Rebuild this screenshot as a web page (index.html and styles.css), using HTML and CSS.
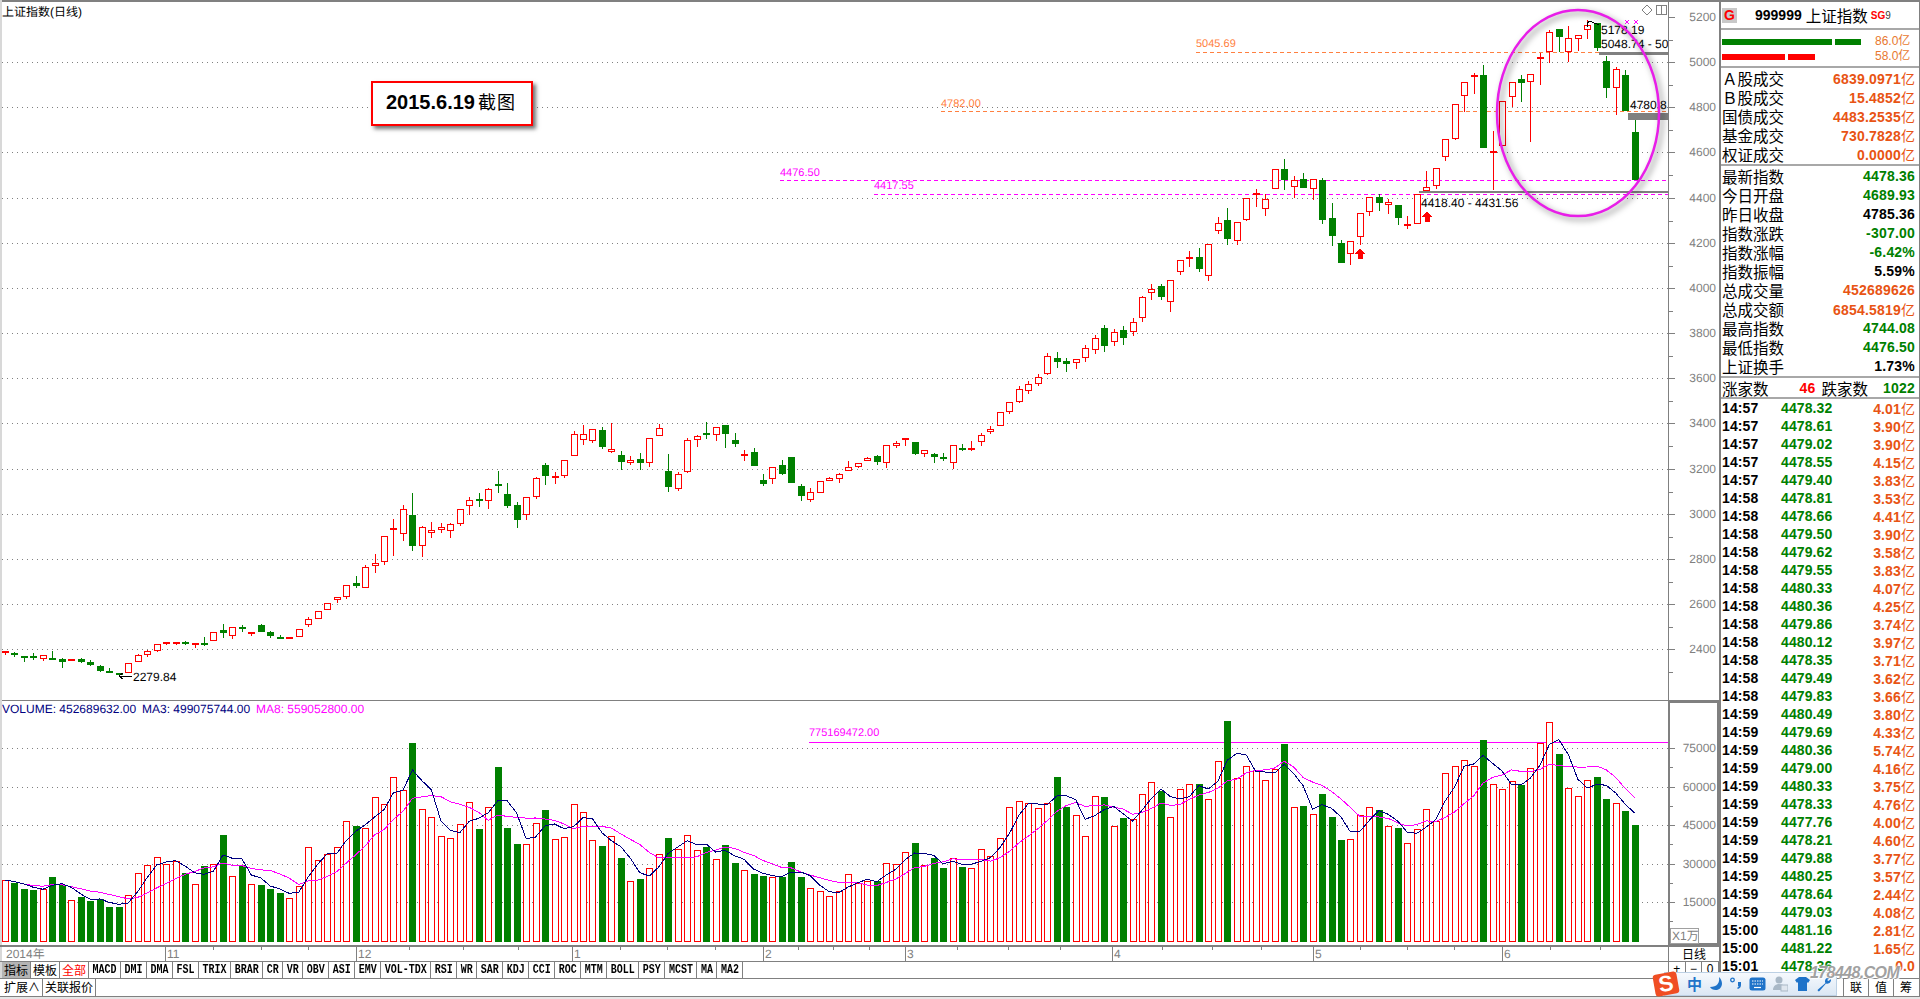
FILE: index.html
```html
<!DOCTYPE html>
<html lang="zh-CN">
<head>
    <meta charset="UTF-8">
    <title>上证指数(日线)</title>
    <link rel="stylesheet" href="styles.css">
</head>
<body>
<div class="app">
    <div class="workspace">
        <div class="chart-col">
            <div class="price-pane">
                <svg id="price-chart" class="chart" width="1719" height="701" viewBox="0 0 1719 701"></svg>
                <div class="note">2015.6.19<span class="note-cn">截图</span></div>
            </div>
            <div class="vol-pane">
                <svg id="vol-chart" class="chart" width="1719" height="244" viewBox="0 701 1719 244"></svg>
            </div>
            <div class="date-row">
                <svg id="date-axis" class="chart" width="1668" height="16" viewBox="0 945 1668 16"></svg>
                <div class="cycle">日线</div>
            </div>
            <div class="tab-row">
                <div class="tabs">
                    <span class="tab tab-cn tab-on">指标</span>
                    <span class="tab tab-cn">模板</span>
                    <span class="tab tab-cn tab-red">全部</span>
                    <span class="tab"><i>MACD</i></span>
                    <span class="tab"><i>DMI</i></span>
                    <span class="tab"><i>DMA</i></span>
                    <span class="tab"><i>FSL</i></span>
                    <span class="tab"><i>TRIX</i></span>
                    <span class="tab"><i>BRAR</i></span>
                    <span class="tab"><i>CR</i></span>
                    <span class="tab"><i>VR</i></span>
                    <span class="tab"><i>OBV</i></span>
                    <span class="tab"><i>ASI</i></span>
                    <span class="tab"><i>EMV</i></span>
                    <span class="tab"><i>VOL-TDX</i></span>
                    <span class="tab"><i>RSI</i></span>
                    <span class="tab"><i>WR</i></span>
                    <span class="tab"><i>SAR</i></span>
                    <span class="tab"><i>KDJ</i></span>
                    <span class="tab"><i>CCI</i></span>
                    <span class="tab"><i>ROC</i></span>
                    <span class="tab"><i>MTM</i></span>
                    <span class="tab"><i>BOLL</i></span>
                    <span class="tab"><i>PSY</i></span>
                    <span class="tab"><i>MCST</i></span>
                    <span class="tab"><i>MA</i></span>
                    <span class="tab"><i>MA2</i></span>
                </div>
                <div class="zoom-btns">
                    <span class="zoom-btn">+</span>
                    <span class="zoom-btn">−</span>
                    <span class="zoom-btn">0</span>
                </div>
            </div>
        </div>
        <div class="side">
            <div class="side-head">
                <span class="badge">G</span>
                <span class="code">999999</span>
                <span class="name">上证指数</span>
                <span class="sg">SG</span><span class="sg-num">9</span>
            </div>
            <div class="flow">
                <div class="flow-row">
                    <div class="flow-bars"><b class="bar bar-g bar-110"></b><b class="bar bar-g bar-26"></b></div>
                    <span class="flow-val">86.0亿</span>
                </div>
                <div class="flow-row">
                    <div class="flow-bars"><b class="bar bar-r bar-63"></b><b class="bar bar-r bar-27"></b></div>
                    <span class="flow-val">58.0亿</span>
                </div>
            </div>
            <div class="section">
                <div class="row"><span class="label">Ａ股成交</span><span class="val orange">6839.0971<em>亿</em></span></div>
                <div class="row"><span class="label">Ｂ股成交</span><span class="val orange">15.4852<em>亿</em></span></div>
                <div class="row"><span class="label">国债成交</span><span class="val orange">4483.2535<em>亿</em></span></div>
                <div class="row"><span class="label">基金成交</span><span class="val orange">730.7828<em>亿</em></span></div>
                <div class="row"><span class="label">权证成交</span><span class="val orange">0.0000<em>亿</em></span></div>
            </div>
            <div class="section">
                <div class="row"><span class="label">最新指数</span><span class="val green">4478.36</span></div>
                <div class="row"><span class="label">今日开盘</span><span class="val green">4689.93</span></div>
                <div class="row"><span class="label">昨日收盘</span><span class="val">4785.36</span></div>
                <div class="row"><span class="label">指数涨跌</span><span class="val green">-307.00</span></div>
                <div class="row"><span class="label">指数涨幅</span><span class="val green">-6.42%</span></div>
                <div class="row"><span class="label">指数振幅</span><span class="val">5.59%</span></div>
                <div class="row"><span class="label">总成交量</span><span class="val orange">452689626</span></div>
                <div class="row"><span class="label">总成交额</span><span class="val orange">6854.5819<em>亿</em></span></div>
                <div class="row"><span class="label">最高指数</span><span class="val green">4744.08</span></div>
                <div class="row"><span class="label">最低指数</span><span class="val green">4476.50</span></div>
                <div class="row"><span class="label">上证换手</span><span class="val">1.73%</span></div>
            </div>
            <div class="counts">
                <span class="label">涨家数</span>
                <span class="val red count-up">46</span>
                <span class="label count-label">跌家数</span>
                <span class="val green count-down">1022</span>
            </div>
            <div id="trades" class="trades"></div>
        </div>
    </div>
    <div class="status-row">
        <div class="tabs">
            <span class="tab tab-cn">扩展∧</span>
            <span class="tab tab-cn">关联报价</span>
        </div>
        <div class="links">
            <span class="link">联</span>
            <span class="link">值</span>
            <span class="link">筹</span>
        </div>
    </div>

    <div class="ime">
        <span class="ime-logo"><span class="ime-s">S</span></span>
        <span class="ime-cn">中</span>
        <svg class="ime-icon" width="14" height="16" viewBox="0 0 14 16"><path d="M10 1c1 6-2 10-9 10 2 4 11 5 12-3 0-3-1-5-3-7z" fill="#1f73c9"/></svg>
        <svg class="ime-icon" width="12" height="14" viewBox="0 0 12 14"><circle cx="2.5" cy="3" r="1.8" fill="none" stroke="#1f73c9" stroke-width="1.3"/><path d="M8 5h3v3c0 2-1 3-3 4l-1-1c1-.5 1.500-1 1.600-2H8z" fill="#1f73c9"/></svg>
        <svg class="ime-icon" width="17" height="14" viewBox="0 0 17 14"><rect x="0.500" y="0.500" width="16" height="13" rx="2.500" fill="#1f73c9"/><path d="M3 4h11M3 7h11" stroke="#fff" stroke-dasharray="1.500 1" fill="none"/><path d="M5 10.500h7" stroke="#fff" stroke-width="1.200"/></svg>
        <svg class="ime-icon" width="15" height="16" viewBox="0 0 15 16"><circle cx="6" cy="4" r="3.500" fill="#a9b8c6"/><path d="M0 14c0-4 3-6 6-6s5 1 6 3v3z" fill="#a9b8c6"/><rect x="8" y="9" width="7" height="6" fill="#dfe6ee" stroke="#a9b8c6"/></svg>
        <svg class="ime-icon" width="15" height="14" viewBox="0 0 15 14"><path d="M4 0h7l4 3-2 3-1-1v9H3V5L2 6 0 3z" fill="#1f73c9"/></svg>
        <svg class="ime-icon" width="15" height="15" viewBox="0 0 15 15"><path d="M13 1c-2-1-5 0-5 3 0 1 0 1 .5 2L1 12.500c-1 1 .5 2.500 1.500 1.500L9 6.500c3 1 5.500-1.500 5-4.500l-2.500 2L10 3z" fill="#1f73c9"/></svg>
    </div>
    <div class="watermark">178448.COM</div>
</div>
<script src="chart.js"></script>
</body>
</html>
```
FILE: styles.css
```css
* {
    box-sizing: border-box;
}
html, body {
    margin: 0;
    padding: 0;
    background: #fff;
    overflow: hidden;
}
body {
    font-family: "Liberation Sans", "Noto Sans CJK SC", sans-serif;
    font-size: 12px;
    color: #000;
}
.app {
    position: relative;
    width: 1920px;
    height: 999px;
    background: #e6e6e6;
}
.workspace {
    display: flex;
    height: 978px;
    background: #fff;
    border-top: 2px solid #808080;
}
.chart-col {
    width: 1719px;
    margin-top: -2px;
    border-left: 2px solid #d8d8d8;
    position: relative;
}
.chart {
    display: block;
    shape-rendering: crispEdges;
}
.chart text {
    font-family: "Liberation Sans", "Noto Sans CJK SC", sans-serif;
    font-size: 12px;
    text-rendering: geometricPrecision;
}
.chart .small {
    font-size: 11px;
}
.chart .axis-label {
    fill: #808080;
    text-anchor: end;
}
.chart .ring {
    shape-rendering: auto;
    filter: drop-shadow(3px 3px 3px rgba(0, 0, 0, .5));
}
.chart .ma {
    fill: none;
    stroke-width: 1;
}
.price-pane {
    position: relative;
    width: 1717px;
    height: 701px;
    overflow: hidden;
}
.price-pane .chart {
    margin-left: -2px;
}
.vol-pane {
    width: 1717px;
    height: 244px;
    overflow: hidden;
}
.vol-pane .chart {
    margin-left: -2px;
}
.note {
    position: absolute;
    left: 369px;
    top: 81px;
    width: 162px;
    height: 45px;
    padding-left: 13px;
    background: #fff;
    border: 2px solid #f00;
    box-shadow: 3px 3px 4px rgba(0, 0, 0, .55);
    font-size: 20px;
    font-weight: bold;
    line-height: 37px;
}
.note-cn {
    font-family: "Noto Sans CJK SC", sans-serif;
    font-size: 18px;
    font-weight: normal;
    letter-spacing: 1px;
    margin-left: 3px;
}
.date-row {
    display: flex;
    height: 16px;
    margin-left: -2px;
    overflow: hidden;
}
.cycle {
    width: 51px;
    text-align: center;
    line-height: 14px;
    border-top: 2px solid #808080;
    border-left: 1px solid #808080;
    font-family: "Noto Sans CJK SC", sans-serif;
}
.tab-row {
    display: flex;
    height: 17px;
    margin-left: -2px;
    border-top: 1px solid #808080;
}
.tabs {
    display: flex;
    flex: 1;
    height: 100%;
    padding-left: 2px;
}
.tab {
    display: block;
    height: 100%;
    padding: 0 3.500px;
    border-right: 1px solid #808080;
    font-family: "Liberation Mono", monospace;
    font-size: 10px;
    font-weight: bold;
    line-height: 15px;
}
.tab i {
    display: inline-block;
    font-style: normal;
    transform: scaleY(1.3);
}
.tab-cn {
    padding: 0 2px;
    font-family: "Noto Sans CJK SC", sans-serif;
    font-size: 12px;
    font-weight: normal;
    line-height: 15px;
}
.tab-on {
    background: #b4b4b4;
}
.tab-red {
    color: #f00;
}
.zoom-btns {
    display: flex;
    width: 51px;
    border-left: 1px solid #808080;
}
.zoom-btn {
    flex: 1;
    text-align: center;
    line-height: 15px;
    border-right: 1px solid #808080;
}
.side {
    width: 201px;
    margin-top: -2px;
    border-top: 2px solid #808080;
    border-left: 2px solid #808080;
    border-right: 1px solid #808080;
    overflow: hidden;
}
.side-head {
    display: flex;
    align-items: center;
    height: 28px;
    padding: 0 0 0 1px;
    border-bottom: 2px solid #a8a8a8;
    font-size: 14px;
}
.badge {
    width: 15px;
    height: 15px;
    background: #c8c8c8;
    color: #f00;
    font-weight: bold;
    font-size: 14px;
    line-height: 15px;
    text-align: center;
}
.code {
    margin-left: 18px;
    font-weight: bold;
    font-size: 14px;
}
.name {
    margin-left: 4px;
    font-family: "Noto Sans CJK SC", sans-serif;
    font-size: 15.500px;
}
.sg {
    margin-left: 3px;
    color: #f00;
    font-size: 10px;
    font-weight: bold;
}
.sg-num {
    color: #404040;
    font-size: 10px;
}
.flow {
    height: 38px;
    padding: 4px 0 0 1px;
    border-bottom: 2px solid #a8a8a8;
}
.flow-row {
    display: flex;
    align-items: center;
    height: 15px;
}
.flow-bars {
    display: flex;
    gap: 3px;
    width: 153px;
}
.bar {
    display: block;
    height: 6px;
}
.bar-g { background: #008000; }
.bar-r { background: #f00; }
.bar-110 { width: 110px; }
.bar-26 { width: 26px; }
.bar-63 { width: 63px; }
.bar-27 { width: 27px; }
.flow-val {
    color: #e87830;
    font-size: 12px;
    line-height: 15px;
    font-family: "Liberation Sans", "Noto Sans CJK SC", sans-serif;
}
.section {
    padding: 1px 4px 0 1px;
    border-bottom: 2px solid #a8a8a8;
}
.row {
    display: flex;
    justify-content: space-between;
    height: 19px;
    line-height: 19px;
}
.label {
    font-family: "Noto Sans CJK SC", sans-serif;
    font-size: 15.500px;
    font-weight: normal;
    white-space: nowrap;
}
.val {
    font-size: 14px;
    font-weight: bold;
    letter-spacing: .2px;
}
.val em {
    font-family: "Noto Sans CJK SC", sans-serif;
    font-style: normal;
    font-weight: normal;
    letter-spacing: 0;
}
.orange { color: #e85414; }
.green { color: #008000; }
.red { color: #f00; }
.counts {
    display: flex;
    height: 21px;
    padding: 0 4px 0 1px;
    line-height: 21px;
    border-bottom: 2px solid #a8a8a8;
}
.count-up {
    width: 47px;
    text-align: right;
}
.count-label {
    margin-left: 6px;
}
.count-down {
    margin-left: auto;
}
.trades {
    padding: 0 4px 0 1px;
}
.trade {
    display: flex;
    height: 18px;
    line-height: 18px;
    font-size: 14px;
    font-weight: bold;
    letter-spacing: .1px;
}
.trade-time {
    width: 59px;
}
.trade-price {
    width: 60px;
    color: #008000;
}
.trade-vol {
    flex: 1;
    color: #e85414;
    text-align: right;
}
.trade-vol em {
    font-family: "Noto Sans CJK SC", sans-serif;
    font-style: normal;
    font-weight: normal;
}
.status-row {
    display: flex;
    height: 19px;
    background: #fff;
    border-top: 1px solid #808080;
    border-bottom: 1px solid #808080;
    border-right: 1px solid #808080;
    font-family: "Noto Sans CJK SC", sans-serif;
}
.links {
    display: flex;
    width: 76px;
}
.link {
    width: 25px;
    text-align: center;
    font-size: 12px;
    line-height: 16px;
    border-left: 1px solid #808080;
}
.watermark {
    position: absolute;
    left: 1810px;
    top: 964px;
    color: rgba(130, 130, 130, .75);
    font-size: 16px;
    font-weight: bold;
    font-style: italic;
    letter-spacing: -.6px;
    text-shadow: 0 0 2px #fff, 0 0 2px #fff, 1px 1px 1px #fff;
}
.ime {
    position: absolute;
    left: 1664px;
    top: 972px;
    display: flex;
    align-items: center;
    gap: 7px;
    width: 173px;
    height: 24px;
    padding-left: 22px;
    background: linear-gradient(#f6f9fd, #dbe7f4);
    border: 1px solid #bcd0e4;
}
.ime::after {
    content: "";
    position: absolute;
    right: 0;
    top: -2px;
    width: 5px;
    height: 5px;
    border-radius: 50%;
    background: #e04030;
}
.ime-logo {
    position: absolute;
    left: -11px;
    top: 0;
    width: 24px;
    height: 22px;
    background: #f04e23;
    border-radius: 3px;
    transform: rotate(-10deg);
    text-align: center;
}
.ime-s {
    color: #fff;
    font-size: 22px;
    font-weight: bold;
    line-height: 21px;
}
.ime-cn {
    color: #1f73c9;
    font-family: "Noto Sans CJK SC", sans-serif;
    font-size: 15px;
    font-weight: bold;
    line-height: 22px;
}
.ime-icon {
    display: block;
}
```
FILE: chart.js
```js
// candles: [color, body top, body bottom, high, low] - all in page pixels
var candles = [
    ['r',651,653,651,655],['g',653,655,652,657],['g',656,657,656,662],['g',656,657,653,660],['r',655,659,655,661],
    ['g',658,659,651,659],['g',659,662,658,668],['r',659,661,659,661],['g',659,662,658,663],['g',662,665,660,666],
    ['g',666,671,665,672],['g',671,672,668,672],['g',673,674,673,677],['r',663,673,663,673],['r',655,662,654,662],
    ['r',651,655,650,657],['r',644,651,644,652],['r',642,644,642,645],['r',642,643,642,645],['g',642,644,641,645],
    ['r',643,645,643,648],['g',643,645,637,646],['r',632,641,632,641],['g',630,633,624,638],['r',627,636,627,639],
    ['g',627,628,625,632],['r',632,633,632,636],['g',625,632,624,632],['g',632,636,631,638],['g',637,638,635,639],
    ['r',637,639,637,639],['r',629,637,629,637],['r',619,625,617,627],['r',611,619,611,619],['r',603,610,603,610],
    ['r',597,600,597,603],['r',585,597,585,599],['g',583,586,576,588],['r',567,588,565,588],['r',563,566,554,573],
    ['r',536,562,536,565],['r',528,530,519,556],['r',509,534,505,541],['g',515,546,493,551],['r',527,546,526,557],
    ['r',530,533,522,538],['r',527,530,523,533],['r',524,531,523,538],['r',509,524,509,526],['r',500,506,497,515],
    ['g',499,500,493,507],['r',489,501,488,509],['g',484,485,471,493],['g',494,506,483,508],['g',505,520,502,528],
    ['r',497,515,497,520],['r',478,497,477,499],['g',465,476,463,485],['r',476,477,472,484],['r',460,476,460,478],
    ['r',434,456,431,456],['r',434,440,425,445],['r',429,441,429,443],['g',430,447,427,449],['r',449,452,423,453],
    ['g',455,462,451,470],['r',460,463,456,465],['g',459,463,453,470],['r',438,463,438,467],['r',428,436,424,436],
    ['g',471,487,454,492],['r',474,489,472,491],['r',440,472,438,473],['r',436,440,435,447],['g',433,434,422,439],
    ['r',427,435,427,441],['g',425,434,425,448],['g',440,444,433,447],['r',454,456,450,461],['g',452,466,448,466],
    ['g',480,484,474,486],['r',467,479,467,484],['g',465,474,460,475],['g',457,483,457,483],['g',486,496,484,501],
    ['r',492,500,488,502],['r',481,493,481,493],['r',478,481,477,481],['r',474,479,473,483],['r',467,471,461,471],
    ['r',463,467,463,468],['r',458,461,457,461],['g',456,462,455,465],['r',445,463,445,468],['r',443,446,441,448],
    ['r',438,439,438,446],['g',442,454,442,455],['r',450,454,450,457],['g',454,457,453,463],['g',457,459,453,461],
    ['r',445,463,445,469],['g',448,449,444,451],['r',448,449,441,451],['r',435,442,433,446],['r',429,432,426,434],
    ['r',412,426,412,426],['r',402,412,402,414],['r',389,402,386,403],['r',384,391,381,394],['r',377,384,374,386],
    ['r',356,374,353,375],['g',358,362,352,368],['g',361,364,358,372],['r',359,363,359,369],['r',348,358,345,362],
    ['r',338,350,335,354],['g',328,346,325,352],['r',332,342,329,346],['g',330,338,326,345],['r',322,332,318,336],
    ['r',297,318,296,322],['r',289,293,284,300],['g',286,297,284,300],['r',280,302,280,312],['r',260,272,260,275],
    ['r',257,259,251,267],['g',257,269,248,272],['r',244,276,244,281],['r',223,231,217,234],['g',220,239,208,245],
    ['r',222,241,222,245],['r',198,220,198,221],['r',193,194,189,207],['r',199,209,194,216],['r',169,189,169,189],
    ['g',169,180,159,190],['r',180,187,176,198],['g',179,188,173,188],['r',179,189,179,200],['g',180,220,178,224],
    ['g',218,236,203,246],['g',243,263,240,263],['r',241,254,241,265],['r',213,237,213,245],['r',197,212,197,216],
    ['g',197,203,194,211],['r',202,205,199,214],['g',205,218,205,225],['r',224,226,216,229],['r',194,224,194,224],
    ['r',187,191,171,191],['r',168,186,168,189],['r',139,157,139,161],['r',104,139,104,140],['r',82,96,82,112],
    ['r',75,77,73,94],['g',75,148,65,148],['r',151,152,131,190],['r',101,146,101,146],['r',82,97,82,107],
    ['g',79,83,75,102],['r',74,82,74,142],['r',57,59,53,85],['r',32,52,30,63],['g',29,37,29,52],
    ['r',38,52,26,62],['r',35,39,35,51],['r',25,30,20,39],['g',23,48,23,51],['g',61,88,56,98],
    ['r',69,88,67,115],['g',75,111,70,111],['g',132,180,120,180]
];

// top of each volume bar
var volTops = [
    880,883,889,890,889,877,885,900,897,901,899,907,907,895,873,865,857,864,861,873,
    884,866,864,835,876,865,884,885,889,893,898,886,847,860,854,847,821,826,828,797,
    804,777,790,743,809,817,836,838,824,802,829,807,767,828,844,844,823,810,839,837,
    804,812,840,846,836,858,881,879,868,854,838,849,835,850,847,859,845,863,870,874,
    876,877,877,862,877,888,891,896,891,874,883,881,881,863,864,852,843,865,858,868,
    858,867,868,849,856,838,807,801,803,808,803,777,807,815,836,796,797,826,818,819,
    794,782,791,817,789,784,784,799,761,721,778,766,770,780,769,744,807,806,814,794,
    817,840,839,815,807,810,826,828,843,829,809,821,773,766,760,766,740,784,789,781,
    785,768,743,722,754,788,796,780,777,799,803,811,825
];
var VOL_BOTTOM = 942;
var RED = '#ff0000', GREEN = '#008000', GRAY = '#808080', NAVY = '#000080', PINK = '#ff00ff', ORANGE = '#ff8040';

function barX(i) {
    return 5 + 9.475 * i;
}
function line(x1, y1, x2, y2, color, extra) {
    return '<line x1="' + x1 + '" y1="' + y1 + '" x2="' + x2 + '" y2="' + y2 + '" stroke="' + color + '" ' + (extra || '') + '/>';
}
function label(x, y, str, color, cls) {
    return '<text x="' + x + '" y="' + y + '" fill="' + color + '"' + (cls ? ' class="' + cls + '"' : '') + '>' + str + '</text>';
}
function box(x, top, w, h, color, filled) {
    if (filled) {
        return '<rect x="' + x + '" y="' + top + '" width="' + w + '" height="' + h + '" fill="' + color + '"/>';
    }
    return '<rect x="' + (x + .5) + '" y="' + (top + .5) + '" width="' + (w - 1) + '" height="' + (h - 1) + '" fill="#fff" stroke="' + color + '"/>';
}
function grid(y) {
    return line(2, y + .5, 1668, y + .5, GRAY, 'stroke-dasharray="1 4"');
}
function upArrow(x, y) {
    return '<polygon fill="' + RED + '" points="' + [x, y, x + 5, y + 6, x + 2.500, y + 6, x + 2.500, y + 11, x - 2.500, y + 11, x - 2.500, y + 6, x - 5, y + 6].join(',') + '"/>';
}
function axisLabel(y, str) {
    return '<text x="1716" y="' + y + '" class="axis-label">' + str + '</text>';
}

function drawPrice() {
    var s = '';
    s += label(2, 16, '上证指数(日线)', '#000');
    var prices = [5000, 4800, 4600, 4400, 4200, 4000, 3800, 3600, 3400, 3200, 3000, 2800, 2600, 2400];
    prices.forEach(function (p, k) {
        s += grid(Math.round(62 + k * 45.17));
    });

    // drawn levels
    s += label(1196, 47, '5045.69', ORANGE, 'small');
    s += line(1196, 52.5, 1668, 52.5, ORANGE, 'stroke-dasharray="4 3"');
    s += label(941, 107, '4782.00', ORANGE, 'small');
    s += line(941, 111.5, 1668, 111.5, ORANGE, 'stroke-dasharray="4 3"');
    s += label(780, 176, '4476.50', PINK, 'small');
    s += line(780, 180.5, 1668, 180.5, PINK, 'stroke-dasharray="4 3"');
    s += label(874, 189, '4417.55', PINK, 'small');
    s += line(874, 194.5, 1668, 194.5, PINK, 'stroke-dasharray="4 3"');

    candles.forEach(function (c, i) {
        var cx = barX(i), color = c[0] == 'r' ? RED : GREEN;
        var wick = Math.round(cx) + .5;
        s += line(wick, c[3], wick, c[4], color);
        if (c[0] == 'r') {
            s += box(Math.round(cx - 3), c[1], 7, Math.max(c[2] - c[1], 2), color, c[2] - c[1] < 3);
        } else {
            s += box(Math.round(cx - 3), c[1], 7, Math.max(c[2] - c[1], 2), color, true);
        }
    });

    // gap bands
    s += box(1419, 191, 249, 2, GRAY, true);
    s += box(1599, 52, 69, 3, GRAY, true);
    s += box(1628, 113, 40, 7, GRAY, true);
    s += label(1421, 207, '4418.40 - 4431.56', '#000');
    s += label(1601, 34, '5178.19', '#000');
    s += label(1601, 48, '5048.74 - 50', '#000');
    s += label(1630, 109, '4780.8', '#000');
    s += label(133, 681, '2279.84', '#000');
    s += '<path d="M119 676h13M119 676l4-3M119 676l4 3" fill="none" stroke="#000"/>';
    s += '<path d="M1587 27c0-6 3-6 5-5l7 3" fill="none" stroke="#000"/>';
    s += upArrow(1360, 248) + upArrow(1427, 211);
    // two small marks above the high
    s += '<path d="M1625 20l4 4M1629 20l-4 4M1634 20l4 4M1638 20l-4 4" fill="none" stroke="' + PINK + '"/>';

    // corner buttons
    s += '<path d="M1647 5l5 5-5 5-5-5z" fill="none" stroke="' + GRAY + '"/>';
    s += '<rect x="1656.500" y="5.500" width="10" height="9" fill="none" stroke="' + GRAY + '"/>';
    s += line(1661.5, 5, 1661.5, 15, GRAY);

    // y axis
    s += line(1668.5, 0, 1668.5, 701, GRAY);
    var ys = [17].concat(prices.map(function (p, k) { return Math.round(62 + k * 45.17); }));
    ys.forEach(function (y, k) {
        var text = 5200 - k * 200;
        s += line(1668, y + .5, 1675, y + .5, GRAY);
        s += line(1668, y + 23.5, 1673, y + 23.5, GRAY);
        s += axisLabel(y + 4, text);
    });

    s += '<ellipse class="ring" cx="1578" cy="113" rx="81" ry="103" fill="none" stroke="#e81ee8" stroke-width="2.500"/>';
    s += line(0, 700.5, 1719, 700.5, GRAY);
    document.getElementById('price-chart').innerHTML = s;
}

function movingAvg(n) {
    return volTops.map(function (top, i) {
        var start = Math.max(0, i - n + 1), sum = 0;
        for (var k = start; k <= i; k++) sum += volTops[k];
        return barX(i) + ',' + (sum / (i - start + 1)).toFixed(1);
    }).join(' ');
}

function drawVolume() {
    var s = '';
    s += label(2, 713, 'VOLUME: 452689632.00', NAVY);
    s += label(142, 713, 'MA3: 499075744.00', NAVY);
    s += label(256, 713, 'MA8: 559052800.00', PINK);
    s += label(809, 736, '775169472.00', PINK, 'small');

    var ys = [748, 787, 825, 864, 902];
    ys.forEach(function (y) {
        s += grid(y);
    });
    s += line(809, 742.5, 1668, 742.5, PINK);

    volTops.forEach(function (top, i) {
        var cx = barX(i);
        s += box(Math.round(cx - 3), top, 7, VOL_BOTTOM - top, candles[i][0] == 'r' ? RED : GREEN, candles[i][0] == 'g');
    });
    s += '<polyline class="ma" stroke="' + PINK + '" points="' + movingAvg(8) + '"/>';
    s += '<polyline class="ma" stroke="' + NAVY + '" points="' + movingAvg(3) + '"/>';

    // axis and its frame
    s += '<rect x="1669" y="702" width="49" height="242" fill="none" stroke="' + GRAY + '" stroke-width="2"/>';
    ys.forEach(function (y, k) {
        s += line(1668, y + .5, 1675, y + .5, GRAY);
        s += line(1668, y + 19.5, 1673, y + 19.5, GRAY);
        s += axisLabel(y + 4, 75000 - k * 15000);
    });
    s += '<rect x="1670.500" y="928.500" width="28" height="15" fill="#fff" stroke="#a0a0a0"/>';
    s += label(1672, 940, 'X1万', GRAY);
    document.getElementById('vol-chart').innerHTML = s;
}

function drawDates() {
    var s = line(0, 945.5, 1668, 945.5, GRAY, 'stroke-width="2"');
    [213, 261, 308, 409, 463, 518, 620, 667, 715, 798, 833, 869, 957, 1008, 1060, 1162, 1212, 1261, 1360, 1407, 1454, 1550, 1600].forEach(function (x) {
        s += line(x + .5, 945, x + .5, 950, GRAY);
    });
    var months = [[165, '11'], [356, '12'], [572, '1'], [763, '2'], [905, '3'], [1112, '4'], [1313, '5'], [1502, '6']];
    months.forEach(function (m) {
        s += line(m[0] + .5, 945, m[0] + .5, 961, GRAY);
        s += label(m[0] + 2, 958, m[1], GRAY);
    });
    s += label(6, 958, '2014年', GRAY);
    document.getElementById('date-axis').innerHTML = s;
}

function drawTrades() {
    var rows = [
        ['14:57','4478.32','4.01'],['14:57','4478.61','3.90'],['14:57','4479.02','3.90'],['14:57','4478.55','4.15'],
        ['14:57','4479.40','3.83'],['14:58','4478.81','3.53'],['14:58','4478.66','4.41'],['14:58','4479.50','3.90'],
        ['14:58','4479.62','3.58'],['14:58','4479.55','3.83'],['14:58','4480.33','4.07'],['14:58','4480.36','4.25'],
        ['14:58','4479.86','3.74'],['14:58','4480.12','3.97'],['14:58','4478.35','3.71'],['14:58','4479.49','3.62'],
        ['14:58','4479.83','3.66'],['14:59','4480.49','3.80'],['14:59','4479.69','4.33'],['14:59','4480.36','5.74'],
        ['14:59','4479.00','4.16'],['14:59','4480.33','3.75'],['14:59','4478.33','4.76'],['14:59','4477.76','4.00'],
        ['14:59','4478.21','4.60'],['14:59','4479.88','3.77'],['14:59','4480.25','3.57'],['14:59','4478.64','2.44'],
        ['14:59','4479.03','4.08'],['15:00','4481.16','2.81'],['15:00','4481.22','1.65'],['15:01','4478.36','0.0']
    ];
    var html = '';
    rows.forEach(function (r) {
        var unit = r[2] == '0.0' ? '' : '<em>亿</em>';
        html += '<div class="trade"><span class="trade-time">' + r[0] + '</span><span class="trade-price">' + r[1] + '</span><span class="trade-vol">' + r[2] + unit + '</span></div>';
    });
    document.getElementById('trades').innerHTML = html;
}

drawPrice();
drawVolume();
drawDates();
drawTrades();
```
